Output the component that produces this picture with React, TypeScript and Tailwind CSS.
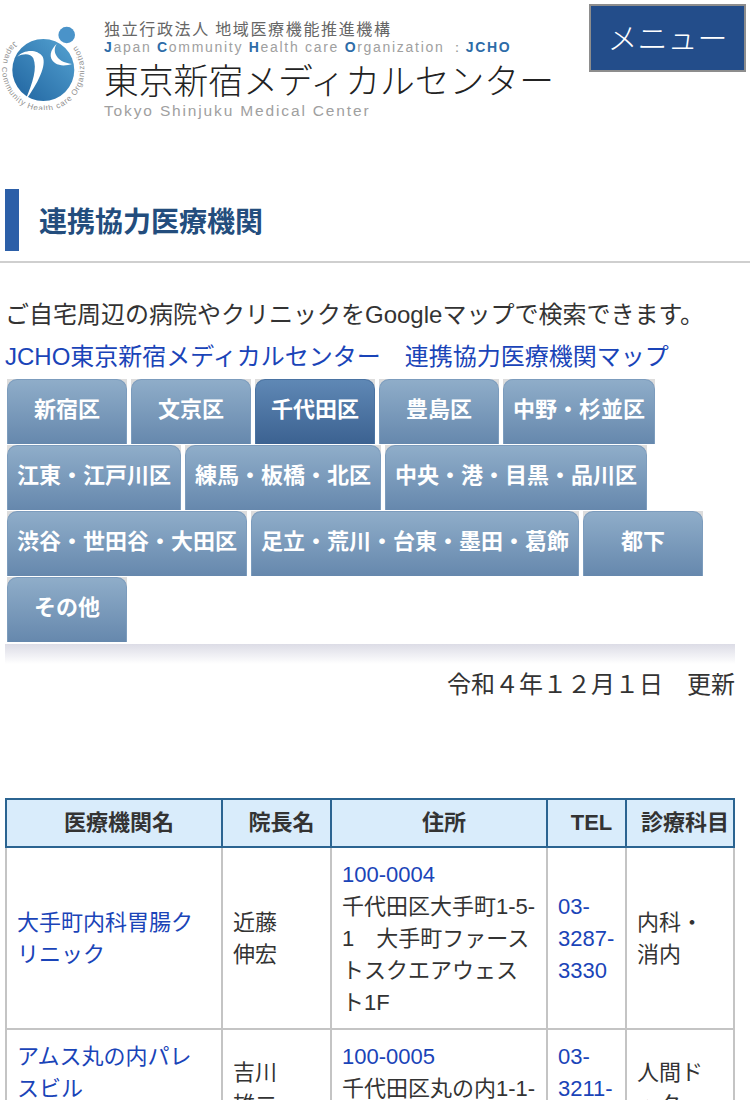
const jp = "font-['Liberation_Sans','Noto_Sans_CJK_JP',sans-serif]";

const wards = [
  { name: "新宿区", w: "w-[120px]" },
  { name: "文京区", w: "w-[120px]" },
  { name: "千代田区", w: "w-[120px]", active: true },
  { name: "豊島区", w: "w-[120px]" },
  { name: "中野・杉並区", w: "w-[152px]" },
  { name: "江東・江戸川区", w: "w-[174px]" },
  { name: "練馬・板橋・北区", w: "w-[196px]" },
  { name: "中央・港・目黒・品川区", w: "w-[262px]" },
  { name: "渋谷・世田谷・大田区", w: "w-[240px]" },
  { name: "足立・荒川・台東・墨田・葛飾", w: "w-[328px]" },
  { name: "都下", w: "w-[120px]" },
  { name: "その他", w: "w-[120px]" },
];

function Logo() {
  return (
    <svg width="90" height="110" viewBox="0 0 90 110" className="shrink-0">
      <defs>
        <linearGradient id="ball" x1="0" y1="1" x2="1" y2="0">
          <stop offset="0" stopColor="#1f639f" />
          <stop offset="1" stopColor="#55a3d2" />
        </linearGradient>
        <path id="ring" d="M14.3 41 A41 41 0 1 0 72.3 41" fill="none" />
      </defs>
      <circle cx="43.3" cy="70" r="31" fill="url(#ball)" />
      <circle cx="66.7" cy="35" r="8.3" fill="#4a93c9" />
      <path
        d="M17.3 56.7 C23.3 50 36.7 48.3 42.7 56.7 C46.7 65 38.3 83.3 25 101 C33.3 81.7 37.3 68.3 33.3 58.3 C30.7 53.3 23.3 53.3 17.3 56.7 Z"
        fill="#fff"
      />
      <path
        d="M57.3 43.3 C50 50 48 58 55 63 C61 67 68 65 72 64 C64 63 58 60 55.5 54 C54 50 55 46 57.3 43.3 Z"
        fill="#fff"
      />
      <text fontSize="8" letterSpacing="0.8" fill="#8f8f8f" fontFamily="Liberation Sans, sans-serif">
        <textPath href="#ring">Japan Community Health care Organization</textPath>
      </text>
    </svg>
  );
}

function WardTab({ name, w, active }: { name: string; w: string; active?: boolean }) {
  return (
    <div className={`${w} h-[65px] bg-[#dcdcdc]`}>
      <a
        className={`h-full rounded-t-[10px] pb-[5px] flex items-center justify-center text-[22px] font-bold text-white border-x border-t ${
          active
            ? "bg-gradient-to-b from-[#5f88b5] to-[#3c6291] border-[#4a73a2]"
            : "bg-gradient-to-b from-[#8fadc9] to-[#6688ad] border-[#7c9cbd]"
        }`}
      >
        {name}
      </a>
    </div>
  );
}

const thClass =
  "border-2 border-[#2b6491] bg-[#d9ecfb] text-[22px] font-bold text-[#333] h-[48px] text-center p-0 pl-[10px] pb-[2px]";
const tdClass =
  "border-2 border-[#c4c4c4] px-[10px] pt-[11px] pb-[9px] align-middle text-[22px] leading-[32px] text-[#333]";
const linkClass = "text-[#1a44b8]";

export default function App() {
  return (
    <div className={`${jp} w-[750px] h-[1100px] overflow-hidden bg-white`}>
      <header className="flex h-[135px]">
        <div className="w-[100px]">
          <Logo />
        </div>
        <div className="w-[489px] pl-[4px] pt-[16px] font-['Noto_Sans_CJK_JP',sans-serif]">
          <div className="text-[16px] leading-[24px] text-[#666] tracking-[1.65px] whitespace-nowrap">
            独立行政法人 地域医療機能推進機構
          </div>
          <div className="font-['Liberation_Sans',sans-serif] text-[14px] leading-[14px] tracking-[1.7px] text-[#a0a0a0] whitespace-nowrap">
            <span className="font-bold text-[#2d6ca8]">J</span>apan <span className="font-bold text-[#2d6ca8]">C</span>ommunity{" "}
            <span className="font-bold text-[#2d6ca8]">H</span>ealth care <span className="font-bold text-[#2d6ca8]">O</span>rganization ：
            <span className="font-bold text-[#2d6ca8]">JCHO</span>
          </div>
          <div className="text-[34.8px] leading-[50px] font-light text-[#222] whitespace-nowrap">東京新宿メディカルセンター</div>
          <div className="-mt-[1px] font-['Liberation_Sans',sans-serif] text-[15.5px] leading-[16px] tracking-[1.85px] text-[#a0a0a0] whitespace-nowrap">
            Tokyo Shinjuku Medical Center
          </div>
        </div>
        <div className="pt-[4px]">
          <button className="w-[157px] h-[68px] pb-[4px] bg-[#234d8a] border-2 border-[#8d8d8d] text-white text-[30px] font-['Noto_Sans_CJK_JP',sans-serif] font-light">
            メニュー
          </button>
        </div>
      </header>

      <div className="mt-[54px] pb-[10px] border-b-2 border-[#cfcfcf]">
        <div className="ml-[5px] h-[62px] border-l-[14px] border-[#2c5fa8] pl-[20px] pt-[6px] flex items-center text-[28px] font-bold text-[#234d7d]">
          連携協力医療機関
        </div>
      </div>

      <div className="px-[5px] w-[740px]">
        <p className="mt-[32px] text-[24px] leading-[40px] text-[#333] whitespace-nowrap">
          ご自宅周辺の病院やクリニックをGoogleマップで検索できます。
        </p>
        <a className="block mt-[2px] text-[24px] leading-[40px] text-[#1a44b8] whitespace-nowrap">
          JCHO東京新宿メディカルセンター　連携協力医療機関マップ
        </a>
        <div className="mt-[2px] ml-[2px] flex flex-wrap gap-x-[4px] gap-y-[1px]">
          {wards.map((ward) => (
            <WardTab key={ward.name} {...ward} />
          ))}
        </div>
        <div className="h-[20px] mt-[2px] bg-gradient-to-b from-[#dcdce6] to-white" />
        <p className="text-right text-[24px] leading-[40px] text-[#333] mt-[1px]">令和４年１２月１日　更新</p>

        <table className="mt-[93px] w-[730px] table-fixed border-collapse">
          <colgroup>
            <col className="w-[216px]" />
            <col className="w-[109px]" />
            <col className="w-[216px]" />
            <col className="w-[79px]" />
            <col className="w-[108px]" />
          </colgroup>
          <thead>
            <tr>
              <th className={thClass}>医療機関名</th>
              <th className={thClass}>院長名</th>
              <th className={thClass}>住所</th>
              <th className={thClass}>TEL</th>
              <th className={thClass}>診療科目</th>
            </tr>
          </thead>
          <tbody>
            <tr>
              <td className={tdClass}><a className={linkClass}>大手町内科胃腸クリニック</a></td>
              <td className={tdClass}>近藤<br />伸宏</td>
              <td className={tdClass}>
                <a className={linkClass}>100-0004</a>
                <br />
                千代田区大手町1-5-1　大手町ファーストスクエアウェスト1F
              </td>
              <td className={tdClass}><a className={linkClass}>03-3287-3330</a></td>
              <td className={tdClass}>内科・<br />消内</td>
            </tr>
            <tr>
              <td className={tdClass}><a className={linkClass}>アムス丸の内パレスビル<br />クリニック</a></td>
              <td className={tdClass}>吉川<br />雄二</td>
              <td className={tdClass}>
                <a className={linkClass}>100-0005</a>
                <br />
                千代田区丸の内1-1-1
              </td>
              <td className={tdClass}><a className={linkClass}>03-3211-1100</a></td>
              <td className={tdClass}>人間ドック</td>
            </tr>
          </tbody>
        </table>
      </div>
    </div>
  );
}
